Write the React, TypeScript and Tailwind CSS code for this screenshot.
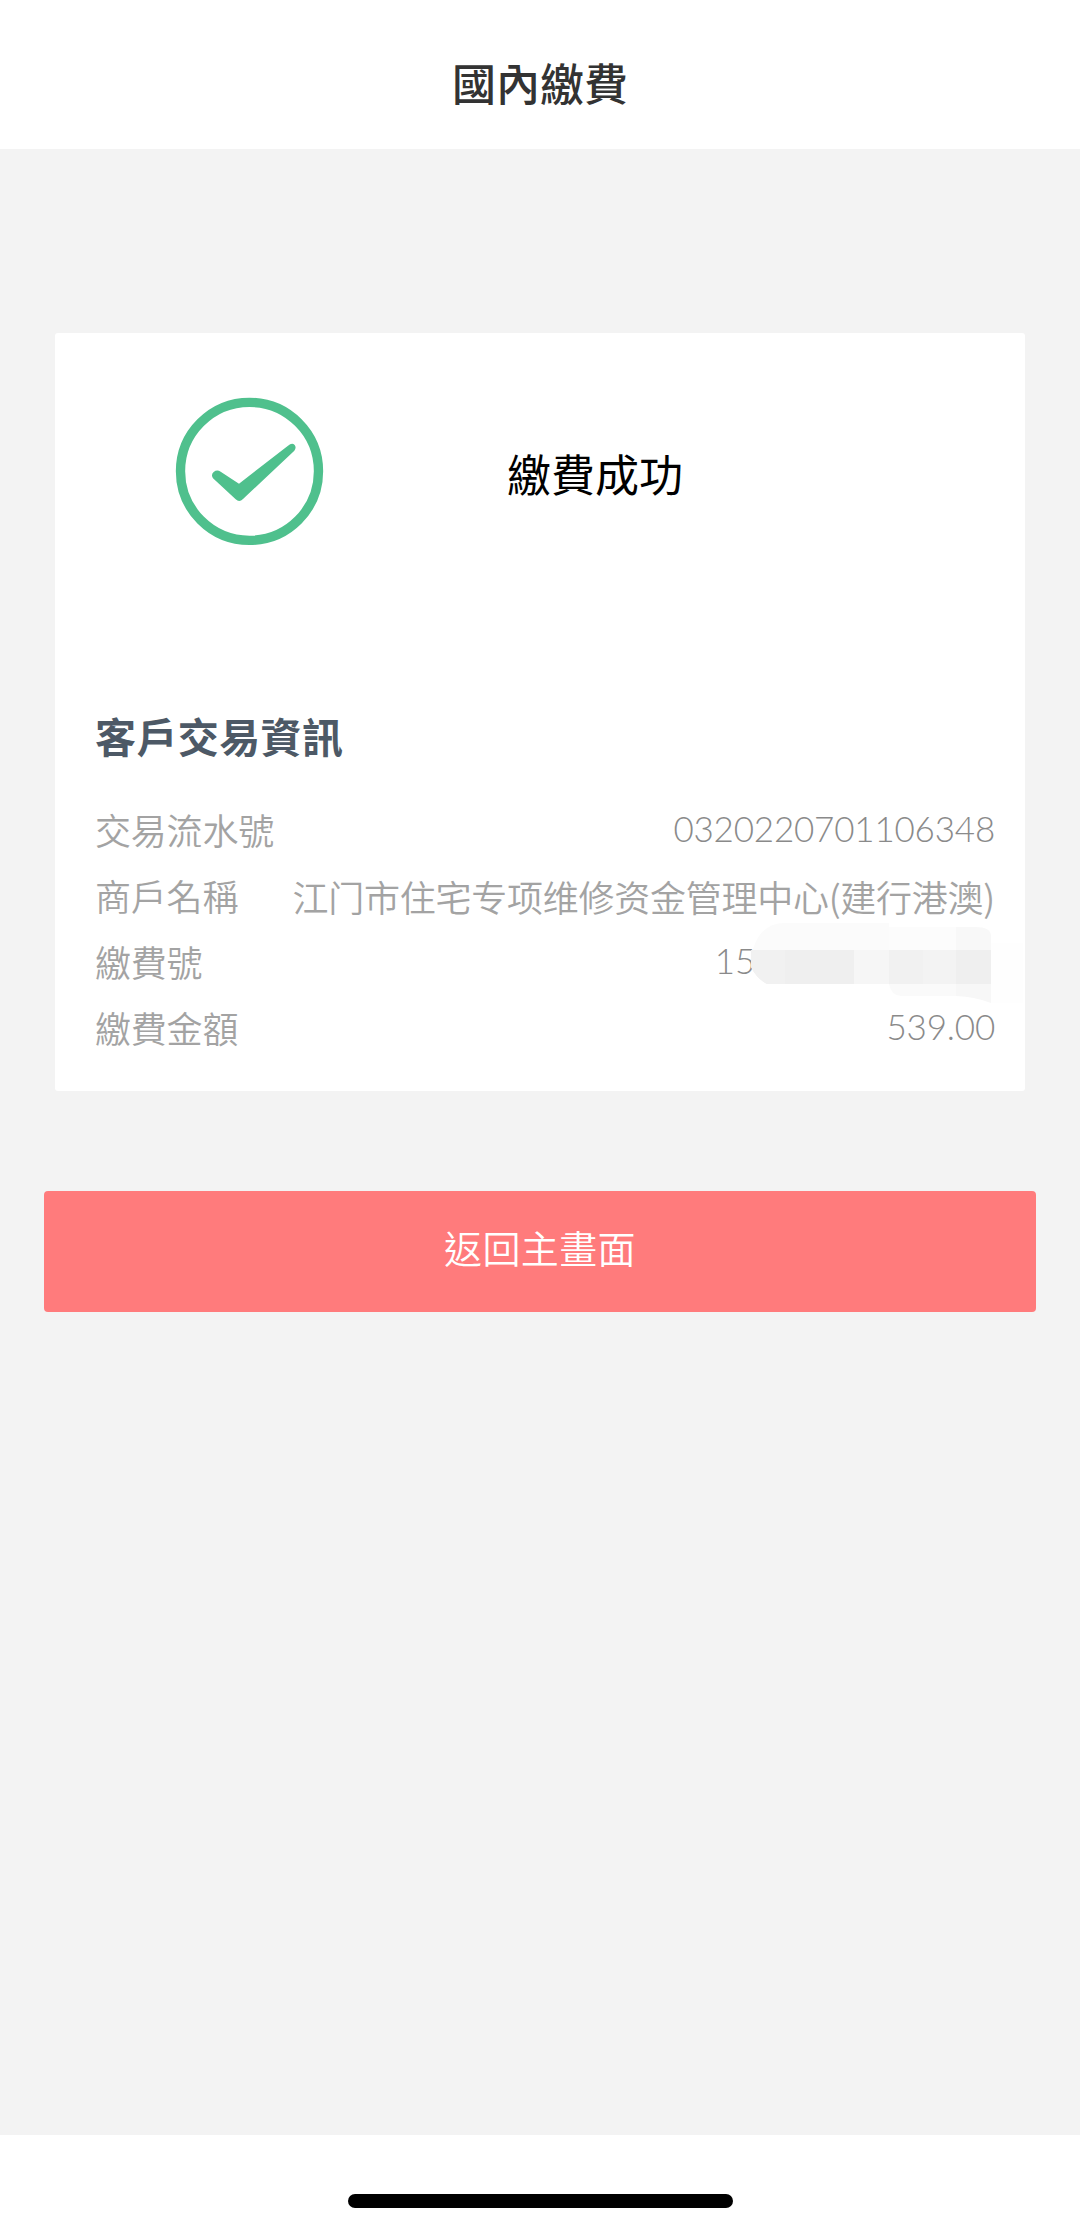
import React from 'react';

interface InfoRow {
  label: string;
  value: React.ReactNode;
}

const SuccessIcon: React.FC = () => (
  <svg viewBox="45 51 447 447" className="w-[149px] h-[149px] shrink-0" fill="none">
    <circle cx="268.5" cy="274" r="207" stroke="#4fc08d" strokeWidth="28" />
    <path
      d="M159 295 Q152 284 161 276 Q171 268 182 275 L237 311 L384 197 Q396 187 404 195 Q410 203 403 212 L249 357 Q238 369 227 358 Z"
      fill="#4fc08d"
    />
  </svg>
);

// Smudge that hides the rest of the payment number
const MaskedSmudge: React.FC = () => (
  <svg viewBox="0 0 272 84" className="absolute -top-[9px] -right-[28px] w-[272px] h-[84px]">
    <path d="M2 30 Q10 4 34 4 L138 4 L138 32 L2 32 Z" fill="#fbfbfb" />
    <path d="M138 8 H205 V32 H138 Z" fill="#fcfcfc" />
    <path d="M205 8 H224 Q240 8 240 17 V32 H205 Z" fill="#f8f8f8" />
    <path d="M240 24 H272 V86 H240 Z" fill="#fefefe" />
    <path d="M0 31 H103 V65 H16 Q6 60 0 48 Z" fill="#efefef" />
    <path d="M0 31 H34 V65 H16 Q6 60 0 48 Z" fill="#f1f1f1" />
    <path d="M103 31 H138 V65 H103 Z" fill="#f6f6f6" />
    <path d="M138 31 H172 V65 H138 Z" fill="#f1f1f1" />
    <path d="M172 31 H205 V65 H172 Z" fill="#f3f3f3" />
    <path d="M205 31 H240 V65 H205 Z" fill="#efefef" />
    <path d="M138 65 H205 V77 H150 Q140 76 138 65 Z" fill="#fafafa" />
    <path d="M205 65 H240 V84 Q225 78 205 77 Z" fill="#f7f7f7" />
  </svg>
);

const App: React.FC = () => {
  const rows: InfoRow[] = [
    { label: '交易流水號', value: '0320220701106348' },
    {
      label: '商戶名稱',
      value: (
        <span
          lang="zh-CN"
          className="block pt-[3px] font-['Noto_Sans_CJK_SC',sans-serif] text-[36px] font-[350] text-[#a3a3a3] tracking-[-0.25px]"
        >
          江门市住宅专项维修资金管理中心(建行港澳)
        </span>
      ),
    },
    {
      label: '繳費號',
      value: (
        <span className="flex pr-[240px]">
          15
          <MaskedSmudge />
        </span>
      ),
    },
    { label: '繳費金額', value: '539.00' },
  ];

  return (
    <div
      lang="zh-TW"
      className="w-[1080px] h-[2230px] flex flex-col bg-[#f3f3f3] font-['Noto_Sans_CJK_TC',sans-serif]"
    >
      {/* Header */}
      <header className="h-[149px] bg-white flex items-center justify-center pt-[15px] shrink-0">
        <h1 className="text-[44px] leading-none font-medium text-[#333333]">國內繳費</h1>
      </header>

      <main className="flex-1 flex flex-col pt-[184px]">
        {/* Result card */}
        <section className="mx-[55px] h-[758px] bg-white rounded-[3px] pl-10 pr-[30px] pt-16 flex flex-col">
          <div className="flex items-center pl-20 h-[149px]">
            <SuccessIcon />
            <p className="ml-[183px] mt-[2px] text-[44px] leading-none text-black">繳費成功</p>
          </div>

          <h2 className="mt-[164px] text-[41px] leading-[50px] tracking-[0.4px] font-bold text-[#4d5966]">客戶交易資訊</h2>

          <dl className="mt-[36px]">
            {rows.map((row) => (
              <div key={row.label} className="relative flex items-center justify-between h-[66px]">
                <dt className="text-[36px] font-[350] text-[#a3a3a3] tracking-[-0.2px]">{row.label}</dt>
                <dd className="pb-[2px] font-['Lato','Noto_Sans_CJK_TC',sans-serif] text-[35px] font-light text-[#8a8a8a] tracking-[-0.2px] whitespace-nowrap">
                  {row.value}
                </dd>
              </div>
            ))}
          </dl>
        </section>

        <button className="mx-11 mt-[100px] h-[121px] pb-[10px] rounded-[4px] bg-[#ff7b7c] text-white text-[38px] font-[350] tracking-[0.4px]">
          返回主畫面
        </button>
      </main>

      {/* Home indicator */}
      <footer className="h-[95px] bg-white flex justify-center items-start pt-[59px] shrink-0">
        <div className="w-[385px] h-[14px] rounded-full bg-black" />
      </footer>
    </div>
  );
};

export default App;
